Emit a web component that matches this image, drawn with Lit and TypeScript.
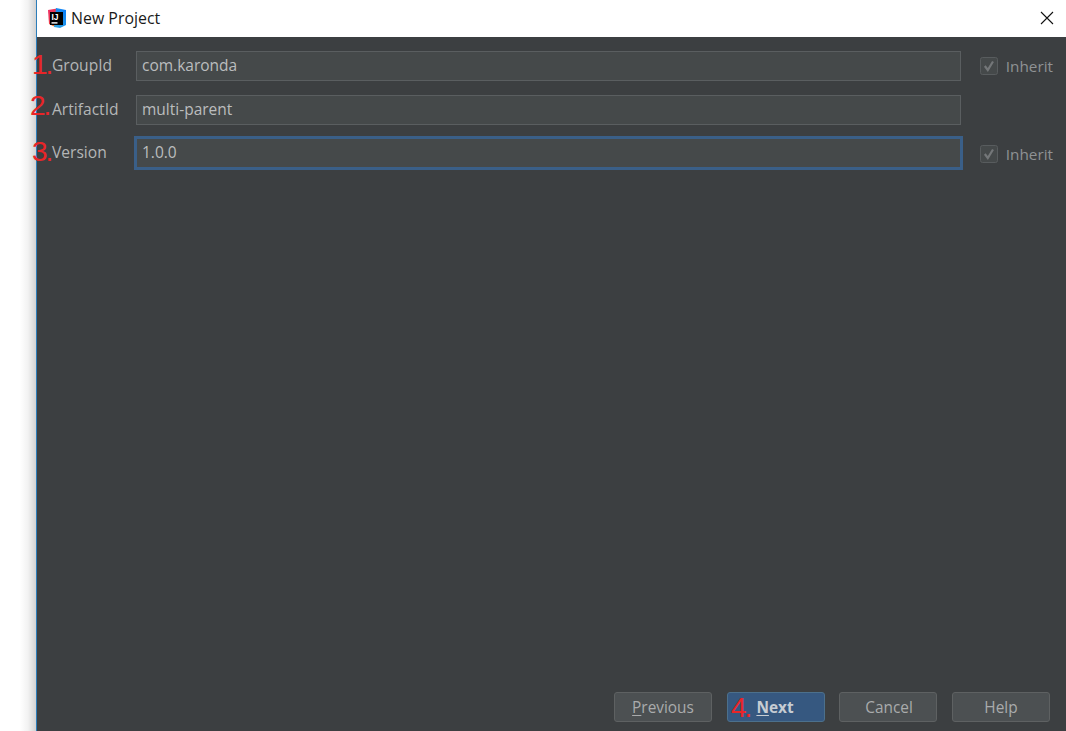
import { LitElement, html, css, svg } from "lit";
import { customElement } from "lit/decorators.js";

const check = svg`<svg class="check" width="18" height="18" viewBox="0 0 18 18"><rect x="0.5" y="0.5" width="17" height="17" rx="2" fill="#45494a" stroke="#585c5e"/><path d="M4.8 9 L7.8 13 L13 4.5" fill="none" stroke="#747779" stroke-width="2.2"/></svg>`;

@customElement("app-root")
export class AppRoot extends LitElement {
  static styles = css`
    :host { display: flex; width: 1066px; height: 731px; overflow: hidden; background: #fff; font-family: "Open Sans", "Noto Sans", sans-serif; position: relative; }
    .gutter { width: 36px; flex: none; background: linear-gradient(to right, #fff 0, #fff 20px, #f2f2f2 28px, #d2d2d2 36px); }
    .window { flex: 1; display: flex; flex-direction: column; border-left: 1px solid #2b7cb9; min-width: 0; }
    .title { height: 37px; flex: none; background: #fff; display: flex; align-items: center; padding: 0 12px 1px 10px; gap: 4px; font-size: 15.9px; color: #1a1a1a; box-sizing: border-box; }
    .title span { flex: 1; }
    .logo, .close { flex: none; display: block; }
    .body { flex: 1; background: #3c3f41; display: flex; flex-direction: column; padding: 14px 13px 9px 15px; min-height: 0; }
    .form { display: grid; grid-template-columns: 84px 825px 1fr; row-gap: 13px; align-items: center; }
    .label { font-size: 15.6px; color: #b4b6b7; padding-bottom: 2px; }
    .field { height: 30px; box-sizing: border-box; background: #45494a; border: 1px solid #5a5e60; color: #bbbdbe; font-size: 15.5px; line-height: 27px; padding-left: 5px; }
    .field.second { margin-top: 1px; }
    .field.focus { border-color: #3a5f88; box-shadow: 0 0 0 2px #3a5f88; }
    .inherit { display: flex; align-items: center; justify-content: flex-end; gap: 8px; font-size: 15.3px; color: #8f9294; }
    .inherit.low { padding-top: 2px; }
    .spacer { flex: 1; }
    .buttons { display: flex; justify-content: flex-end; gap: 15px; margin-right: 3px; }
    .btn { width: 98px; height: 30px; box-sizing: border-box; border: 1px solid #5e6162; border-radius: 3px; background: #4c5052; color: #a9abac; font-size: 15.4px; line-height: 29px; text-align: center; }
    .btn.tight { margin-left: -1px; padding-left: 2px; }
    .btn.primary { padding-right: 2px; }
    .btn u { text-underline-offset: 2px; }
    .btn.primary { background: #365880; border-color: #4c708c; color: #c6ccd3; font-weight: 700; }
    .mark { position: absolute; color: #e92528; font-family: "Liberation Sans", Arial, sans-serif; font-size: 28px; line-height: 28px; letter-spacing: -2px; width: 20px; }
    .m1 { left: 32px; top: 51px; }
    .m2 { left: 30px; top: 92px; }
    .m3 { left: 32px; top: 138px; }
    .m4 { left: 731px; top: 694px; }
  `;

  render() {
    return html`
      <div class="gutter"></div>
      <div class="window">
        <div class="title">
          <svg class="logo" width="20" height="20" viewBox="0 0 20 20">
            <defs>
              <linearGradient id="g1" x1="0" y1="0" x2="0.6" y2="1"><stop offset="0" stop-color="#f0306a"/><stop offset="0.6" stop-color="#e8384f"/><stop offset="1" stop-color="#fc801d"/></linearGradient>
              <linearGradient id="g2" x1="1" y1="0" x2="0.2" y2="1"><stop offset="0" stop-color="#087cfa"/><stop offset="1" stop-color="#2fa4e0"/></linearGradient>
            </defs>
            <path d="M1 2 L10 0.5 L8 19 L2 16 Z" fill="url(#g1)"/>
            <path d="M9 0 L19 2 V17 L13 20 L7 19 Z" fill="url(#g2)"/>
            <rect x="3" y="4" width="13" height="13" fill="#000"/>
            <rect x="4.5" y="14.2" width="6" height="1.4" fill="#fff"/>
            <text x="4.4" y="12" font-family="Liberation Sans, sans-serif" font-size="8.5" font-weight="700" fill="#fff">IJ</text>
          </svg>
          <span>New Project</span>
          <svg class="close" width="14" height="14" viewBox="0 0 14 14"><path d="M1 1 L13 13 M13 1 L1 13" stroke="#111" stroke-width="1.1" fill="none"/></svg>
        </div>
        <div class="body">
          <div class="form">
            <div class="label">GroupId</div>
            <div class="field">com.karonda</div>
            <div class="inherit">${check}<span>Inherit</span></div>
            <div class="label">ArtifactId</div>
            <div class="field second">multi-parent</div>
            <div></div>
            <div class="label">Version</div>
            <div class="field focus">1.0.0</div>
            <div class="inherit low">${check}<span>Inherit</span></div>
          </div>
          <div class="spacer"></div>
          <div class="buttons">
            <div class="btn"><u>P</u>revious</div>
            <div class="btn primary"><u>N</u>ext</div>
            <div class="btn tight">Cancel</div>
            <div class="btn">Help</div>
          </div>
        </div>
      </div>
      <div class="mark m1">1.</div>
      <div class="mark m2">2.</div>
      <div class="mark m3">3.</div>
      <div class="mark m4">4.</div>
    `;
  }
}
